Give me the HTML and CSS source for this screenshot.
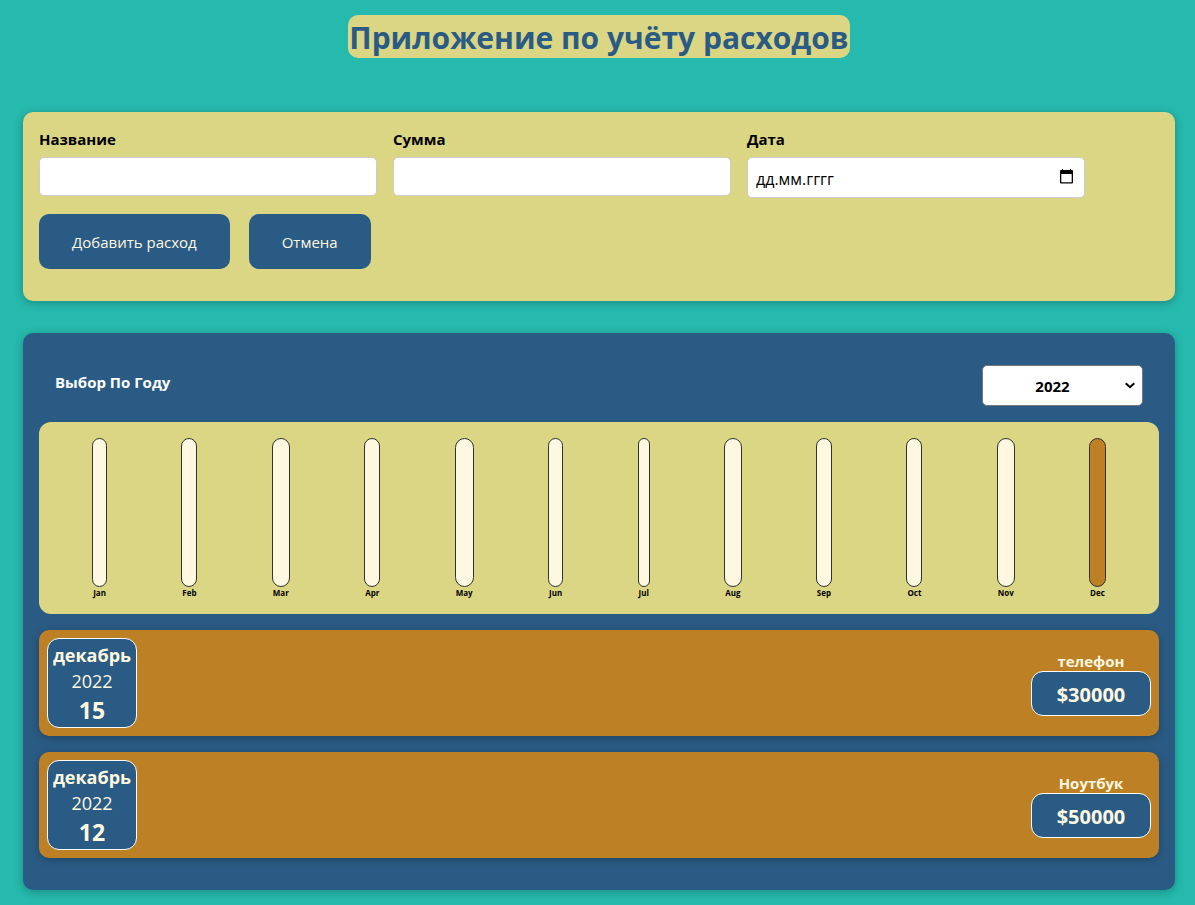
FILE: index.html
```html
<!DOCTYPE html>
<html lang="ru">
<head>
<meta charset="utf-8">
<meta name="viewport" content="width=device-width, initial-scale=1">
<title>Приложение по учёту расходов</title>
<link rel="stylesheet" href="styles.css">
</head>
<body>
<header class="page-header">
  <h1 class="page-title">Приложение по учёту расходов</h1>
</header>
<main class="page">
  <form class="card expense-form">
    <div class="fields">
      <div class="field">
        <label for="name">Название</label>
        <input id="name" type="text">
      </div>
      <div class="field">
        <label for="amount">Сумма</label>
        <input id="amount" type="text" inputmode="decimal">
      </div>
      <div class="field">
        <label for="date">Дата</label>
        <div class="date-box">
          <input id="date" class="date-input" type="text" placeholder="дд.мм.гггг">
          <button class="date-picker" type="button" aria-label="Открыть календарь">
            <svg viewBox="0 0 13 15" width="13" height="15" aria-hidden="true"><path d="M1 1h1V0h1v1h7V0h1v1h1a1 1 0 0 1 1 1v11.500a1 1 0 0 1-1 1H1a1 1 0 0 1-1-1V2a1 1 0 0 1 1-1zM1.300 5v8.300h10.400V5z" fill="#000" fill-rule="evenodd"/></svg>
          </button>
        </div>
      </div>
    </div>
    <div class="actions">
      <button class="btn" type="submit">Добавить расход</button>
      <button class="btn" type="reset">Отмена</button>
    </div>
  </form>

  <section class="card expenses">
    <div class="filter">
      <label for="year">Выбор По Году</label>
      <div class="select-box">
        <select id="year">
          <option>2022</option>
          <option>2021</option>
          <option>2020</option>
        </select>
        <svg class="select-arrow" viewBox="0 0 10 7" width="10" height="7" aria-hidden="true"><path d="M.7 1.200L5 5.200l4.300-4" fill="none" stroke="#000" stroke-width="2"/></svg>
      </div>
    </div>
    <div class="chart">
      <div class="month"><div class="bar"></div><span>Jan</span></div>
      <div class="month"><div class="bar"></div><span>Feb</span></div>
      <div class="month"><div class="bar"></div><span>Mar</span></div>
      <div class="month"><div class="bar"></div><span>Apr</span></div>
      <div class="month"><div class="bar"></div><span>May</span></div>
      <div class="month"><div class="bar"></div><span>Jun</span></div>
      <div class="month"><div class="bar"></div><span>Jul</span></div>
      <div class="month"><div class="bar"></div><span>Aug</span></div>
      <div class="month"><div class="bar"></div><span>Sep</span></div>
      <div class="month"><div class="bar"></div><span>Oct</span></div>
      <div class="month"><div class="bar"></div><span>Nov</span></div>
      <div class="month"><div class="bar bar-full"></div><span>Dec</span></div>
    </div>
    <ul class="list">
      <li class="item">
        <div class="date"><span class="date-month">декабрь</span><span class="date-year">2022</span><span class="date-day">15</span></div>
        <div class="info"><h2>телефон</h2><div class="price">$30000</div></div>
      </li>
      <li class="item">
        <div class="date"><span class="date-month">декабрь</span><span class="date-year">2022</span><span class="date-day">12</span></div>
        <div class="info"><h2>Ноутбук</h2><div class="price">$50000</div></div>
      </li>
    </ul>
  </section>
</main>
</body>
</html>
```
FILE: styles.css
```css
* { box-sizing: border-box; }

body {
  margin: 0;
  padding: 15px 20px 15px 23px;
  background: #26b9ad;
  font-family: "Open Sans", "Noto Sans", sans-serif;
  font-size: 16px;
  line-height: 21px;
  color: #000;
}

.page-header { display: flex; justify-content: center; margin-bottom: 54px; }

.page-title {
  margin: 0;
  padding: 3px 1px 0;
  border-radius: 10px;
  background: #dbd683;
  color: #2a5b84;
  font-size: 30px;
  line-height: 40px;
  font-weight: 700;
}

.page { display: flex; flex-direction: column; gap: 32px; }

.card {
  border-radius: 10px;
  box-shadow: 0 2px 8px rgba(0, 0, 0, 0.25);
}

.expense-form { padding: 16px 16px 32px; background: #dbd683; }

.fields { display: flex; flex-wrap: wrap; gap: 16px; }

.field { width: 338px; }

.field label { display: block; margin: 1px 0 7px; font-size: 15px; font-weight: 700; }

.field input {
  display: block;
  width: 100%;
  height: 39px;
  padding: 8px;
  border: 1px solid #ccc;
  border-radius: 5px;
  background: #fff;
  font: inherit;
}

.date-box { position: relative; }
.field .date-input { height: 41px; padding-top: 10px; }
.date-input::placeholder { color: #000; opacity: 1; }

.date-picker {
  position: absolute;
  top: 12px;
  right: 12px;
  display: flex;
  padding: 0;
  border: 0;
  background: none;
}

.actions { display: flex; gap: 19px; margin-top: 16px; }

.btn {
  height: 55px;
  padding: 1px 33px 0;
  border: 0;
  border-radius: 10px;
  background: #2a5b84;
  color: #fef8e1;
  font: inherit;
  font-size: 15px;
}

.expenses { padding: 32px 16px; background: #2a5b84; }

.filter {
  display: flex;
  justify-content: space-between;
  align-items: center;
  padding: 0 16px;
  color: #fff;
  font-size: 15px;
  font-weight: 700;
}

.filter label { padding-bottom: 6px; }

.select-box { position: relative; }

.select-box select {
  display: block;
  appearance: none;
  width: 161px;
  height: 41px;
  padding: 1px 20px 0 0;
  border: 1px solid #767676;
  border-radius: 5px;
  background: #fff;
  color: #000;
  font: inherit;
  text-align: center;
  text-align-last: center;
}

.select-arrow { position: absolute; top: 17px; right: 8px; pointer-events: none; }

.chart {
  display: flex;
  justify-content: space-around;
  margin-top: 16px;
  padding: 16px;
  border-radius: 12px;
  background: #dbd683;
}

.month {
  display: flex;
  flex-direction: column;
  align-items: center;
  height: 160px;
  font-size: 8px;
  line-height: 11px;
  font-weight: 700;
}

.month span { padding: 0 1px; }

.bar {
  width: 100%;
  height: 149px;
  border: 1px solid #313131;
  border-radius: 12px;
  background: #fef8e1;
}

.bar-full { background: #be8024; }

.list { margin: 0; padding: 0; list-style: none; }

.item {
  display: flex;
  justify-content: space-between;
  align-items: center;
  margin-top: 16px;
  padding: 8px;
  border-radius: 10px;
  background: #be8024;
  box-shadow: 0 2px 8px rgba(0, 0, 0, 0.25);
  color: #fef8e1;
}

.date {
  display: flex;
  flex-direction: column;
  align-items: center;
  justify-content: center;
  width: 90px;
  height: 90px;
  padding-top: 2px;
  border: 1px solid #fff;
  border-radius: 12px;
  background: #2a5b84;
  color: #fef8e1;
}

.date-month { font-size: 18px; line-height: 24px; font-weight: 700; }
.date-year { font-size: 18px; line-height: 28px; }
.date-day { font-size: 23px; line-height: 30px; font-weight: 700; }

.info { text-align: center; }
.info h2 { margin: 4px 0 0; font-size: 15px; line-height: 20px; }

.price {
  width: 120px;
  height: 45px;
  margin-bottom: 4px;
  border: 1px solid #fff;
  border-radius: 12px;
  background: #2a5b84;
  font-size: 20px;
  line-height: 46px;
  font-weight: 700;
}

@media (max-width: 600px) {
  .field { width: 100%; }
  .actions { flex-wrap: wrap; }
}
```
